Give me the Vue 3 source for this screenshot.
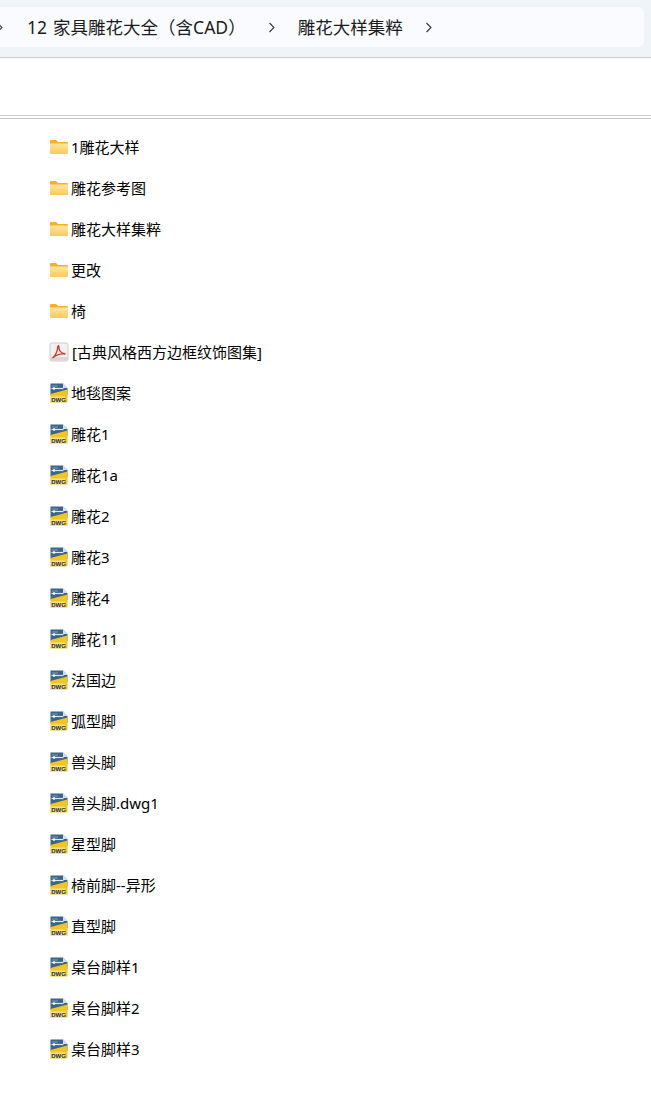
<template>
  <div class="explorer">
    <div class="address-band">
      <div class="address-bar">
        <svg class="chevron chevron--first" width="8" height="11" viewBox="0 0 8 11"><path d="M1.500 1l4.500 4.500-4.500 4.500" /></svg>
        <span class="crumb crumb--first">12&nbsp;&nbsp;家具雕花大全（含CAD）</span>
        <svg class="chevron chevron--a" width="8" height="11" viewBox="0 0 8 11"><path d="M1.500 1l4.500 4.500-4.500 4.500" /></svg>
        <span class="crumb crumb--second">雕花大样集粹</span>
        <svg class="chevron chevron--b" width="8" height="11" viewBox="0 0 8 11"><path d="M1.500 1l4.500 4.500-4.500 4.500" /></svg>
      </div>
    </div>
    <div class="toolbar"></div>
    <div class="column-head"></div>
    <ul class="file-list">
      <li class="file-row" v-for="item in items" :key="item.name">
        <svg v-if="item.type === 'folder'" class="icon" width="20" height="20" viewBox="0 0 20 20">
          <defs>
            <linearGradient id="folderFace" x1="0" y1="0" x2="0" y2="1">
              <stop offset="0" stop-color="#ffe79c" />
              <stop offset="1" stop-color="#fcc85c" />
            </linearGradient>
          </defs>
          <path d="M1 6V4q0-1 1-1h5l2 2h9q1 0 1 1v1H1z" fill="#f6b024" />
          <path d="M1 6.500h18V16q0 1-1 1H2q-1 0-1-1z" fill="url(#folderFace)" />
        </svg>
        <svg v-else-if="item.type === 'pdf'" class="icon" width="20" height="20" viewBox="0 0 20 20">
          <rect x="1" y="1" width="18" height="18" rx="2" fill="#f3f0f0" stroke="#cfcbcb" />
          <rect x="1.500" y="15" width="17" height="3.500" rx="1" fill="#d9d5d5" />
          <path d="M3.500 16c3-2.500 5-7 5.300-11.500 .1-1.200 1.200-1 1.100.3-.3 3.700 2.300 6.700 6.600 7.200-4.500-.6-9.500 1-13 4z" fill="none" stroke="#cf3e36" stroke-width="1.400" />
        </svg>
        <svg v-else class="icon" width="20" height="20" viewBox="0 0 20 20">
          <path d="M1.500 .5h12.500l4.500 4.500v7H1.500z" fill="#3b6488" />
          <path d="M14 .5l4.500 4.500H14z" fill="#d5e3ee" />
          <path d="M2.500 5.500h12" stroke="#dbe8f2" stroke-width="1.200" />
          <path d="M3 3h6" stroke="#7fa3c2" stroke-width="1" />
          <circle cx="5" cy="5.500" r="1.300" fill="#fff" />
          <path d="M1.500 11l17-4.500v13h-17z" fill="#f3c61f" />
          <rect x="1.500" y="13.500" width="14.500" height="6" fill="#f6e08a" />
          <text x="2.200" y="18.800" class="dwg-tag">DWG</text>
        </svg>
        <span class="file-name" :class="{ 'file-name--pdf': item.type === 'pdf' }">{{ item.name }}</span>
      </li>
    </ul>
  </div>
</template>

<script setup>
const folders = ["1雕花大样", "雕花参考图", "雕花大样集粹", "更改", "椅"];
const drawings = [
  "地毯图案", "雕花1", "雕花1a", "雕花2", "雕花3", "雕花4", "雕花11", "法国边",
  "弧型脚", "兽头脚", "兽头脚.dwg1", "星型脚", "椅前脚--异形", "直型脚",
  "桌台脚样1", "桌台脚样2", "桌台脚样3",
];

const items = [
  ...folders.map((name) => ({ name, type: "folder" })),
  { name: "[古典风格西方边框纹饰图集]", type: "pdf" },
  ...drawings.map((name) => ({ name, type: "dwg" })),
];
</script>

<style>
html, body {
  margin: 0;
  background: #fff;
}
</style>

<style scoped>
.explorer {
  width: 651px;
  height: 1099px;
  overflow: hidden;
  background: #fff;
  font-family: "Noto Sans", "Noto Sans CJK SC", sans-serif;
  color: #000;
}

.address-band {
  height: 58px;
  box-sizing: border-box;
  padding: 7px 7px 0 0;
  background: #eff4f9;
  border-bottom: 1px solid #c3cbd2;
}

.address-bar {
  display: flex;
  align-items: center;
  height: 40px;
  background: #f9fbfe;
  border-radius: 0 6px 6px 0;
}

.crumb {
  font-size: 17.500px;
  line-height: 24px;
  white-space: nowrap;
  color: #1c1c1c;
  word-spacing: -1.500px;
}

.crumb--first {
  margin-left: 23px;
}

.crumb--second {
  margin-left: 22px;
}

.chevron {
  flex: none;
  fill: none;
  stroke: #333;
  stroke-width: 1.100;
}

.chevron--first {
  margin-left: -4px;
}

.chevron--a {
  margin-left: 22px;
}

.chevron--b {
  margin-left: 22px;
}

.toolbar {
  height: 57px;
}

.column-head {
  height: 4px;
  box-sizing: border-box;
  border-top: 1px solid #c3cbd2;
  border-bottom: 1px solid #c4c4c4;
}

.file-list {
  list-style: none;
  margin: 0;
  padding: 8px 0 0 49px;
}

.file-row {
  display: flex;
  align-items: center;
  height: 41px;
}

.icon {
  flex: none;
  margin-bottom: 1px;
}

.file-name {
  margin-left: 2px;
  margin-bottom: 2px;
  font-size: 15px;
  line-height: 20px;
  white-space: nowrap;
}

.file-name--pdf {
  margin-left: 3px;
}

.dwg-tag {
  font-family: "Liberation Sans", sans-serif;
  font-size: 6px;
  font-weight: 700;
  fill: #1b2a3a;
}
</style>
